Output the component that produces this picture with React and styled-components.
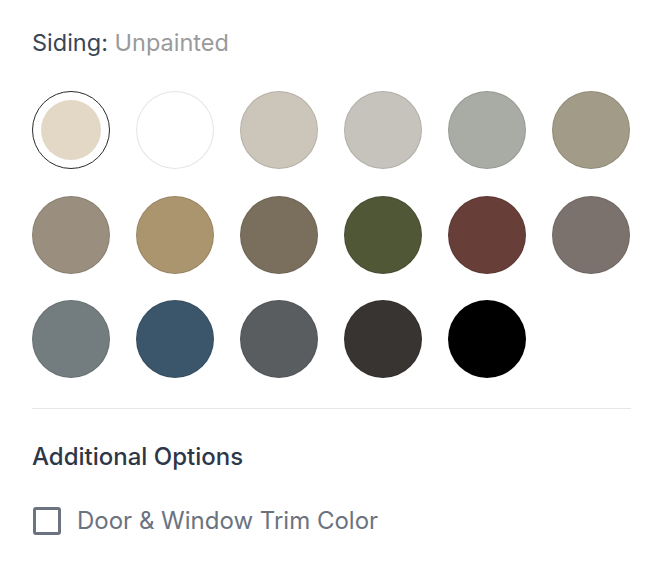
import React, { useState } from "react";
import styled, { createGlobalStyle } from "styled-components";

const GlobalStyle = createGlobalStyle`
    html, body {
        margin: 0;
        padding: 0;
        background: #ffffff;
    }
    body {
        font-family: Inter, "Noto Sans", sans-serif;
    }
`;

const Panel = styled.main`
    width: 599px;
    padding: 27px 32px 0 32px;
`;

const Heading = styled.h2`
    margin: 0;
    font-size: 23.5px;
    line-height: 32px;
    font-weight: 400;
    color: #3a4556;
`;

const Value = styled.span`
    color: #9a9a9a;
`;

const Swatches = styled.div`
    display: grid;
    grid-template-columns: repeat(6, 78px);
    column-gap: 26px;
    row-gap: 26.5px;
    margin-top: 32px;
`;

const Swatch = styled.button`
    width: 78px;
    height: 78px;
    padding: 0;
    border-radius: 50%;
    border: 1px solid ${(p) => (p.$selected ? "#2b2b2b" : "rgba(0, 0, 0, 0.1)")};
    background: ${(p) => (p.$selected ? "#ffffff" : p.$color)};
    display: flex;
    align-items: center;
    justify-content: center;
    cursor: pointer;
`;

const Inner = styled.span`
    width: 60px;
    height: 60px;
    border-radius: 50%;
    background: ${(p) => p.$color};
`;

const Divider = styled.hr`
    margin: 30px 0 0 0;
    border: none;
    border-top: 1px solid #e5e7eb;
`;

const SectionTitle = styled.h3`
    margin: 32px 0 0 0;
    font-size: 24px;
    line-height: 32px;
    font-weight: 500;
    color: #2d3748;
`;

const CheckRow = styled.label`
    display: flex;
    align-items: center;
    gap: 16px;
    margin-top: 32px;
    cursor: pointer;
`;

const Box = styled.span`
    width: 28px;
    height: 28px;
    margin-left: 1px;
    border: 3px solid #6b7280;
    border-radius: 3px;
    box-sizing: border-box;
`;

const CheckText = styled.span`
    font-size: 24px;
    line-height: 32px;
    color: #6b7280;
`;

const colors = [
    "#e3d8c6", "#ffffff", "#cbc5ba", "#c5c3bc", "#a9aba5", "#a19b87",
    "#9a8f7e", "#ab956f", "#7a6f5d", "#4f5737", "#673e38", "#7b726d",
    "#737d80", "#3b566b", "#5a5d60", "#383432", "#000000",
];

function App() {
    const [selected, setSelected] = useState(0);
    return (
        <Panel>
            <GlobalStyle />
            <Heading>
                Siding: <Value>Unpainted</Value>
            </Heading>
            <Swatches>
                {colors.map((c, i) => (
                    <Swatch
                        key={i}
                        $color={c}
                        $selected={i === selected}
                        onClick={() => setSelected(i)}
                    >
                        {i === selected && <Inner $color={c} />}
                    </Swatch>
                ))}
            </Swatches>
            <Divider />
            <SectionTitle>Additional Options</SectionTitle>
            <CheckRow>
                <Box />
                <CheckText>Door &amp; Window Trim Color</CheckText>
            </CheckRow>
        </Panel>
    );
}

export default App;
